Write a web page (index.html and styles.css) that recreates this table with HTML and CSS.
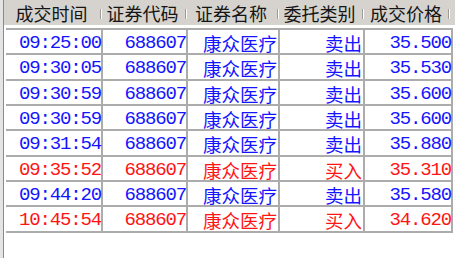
FILE: index.html
```html
<!DOCTYPE html>
<html lang="zh">
<head>
<meta charset="utf-8">
<link rel="stylesheet" href="styles.css">
</head>
<body>
<div class="frame">
  <div class="head">
    <div class="hc">成交时间</div>
    <div class="hc">证券代码</div>
    <div class="hc">证券名称</div>
    <div class="hc">委托类别</div>
    <div class="hc">成交价格</div>
  </div>
  <div class="grid">
    <div class="row sell"><span class="c num">09:25:00</span><span class="c num">688607</span><span class="c cjk">康众医疗</span><span class="c cjk">卖出</span><span class="c num">35.500</span></div>
    <div class="row sell"><span class="c num">09:30:05</span><span class="c num">688607</span><span class="c cjk">康众医疗</span><span class="c cjk">卖出</span><span class="c num">35.530</span></div>
    <div class="row sell"><span class="c num">09:30:59</span><span class="c num">688607</span><span class="c cjk">康众医疗</span><span class="c cjk">卖出</span><span class="c num">35.600</span></div>
    <div class="row sell"><span class="c num">09:30:59</span><span class="c num">688607</span><span class="c cjk">康众医疗</span><span class="c cjk">卖出</span><span class="c num">35.600</span></div>
    <div class="row sell"><span class="c num">09:31:54</span><span class="c num">688607</span><span class="c cjk">康众医疗</span><span class="c cjk">卖出</span><span class="c num">35.880</span></div>
    <div class="row buy"><span class="c num">09:35:52</span><span class="c num">688607</span><span class="c cjk">康众医疗</span><span class="c cjk">买入</span><span class="c num">35.310</span></div>
    <div class="row sell"><span class="c num">09:44:20</span><span class="c num">688607</span><span class="c cjk">康众医疗</span><span class="c cjk">卖出</span><span class="c num">35.580</span></div>
    <div class="row buy"><span class="c num">10:45:54</span><span class="c num">688607</span><span class="c cjk">康众医疗</span><span class="c cjk">买入</span><span class="c num">34.620</span></div>
  </div>
</div>
</body>
</html>
```
FILE: styles.css
```css
html, body {
  margin: 0;
  padding: 0;
}
body {
  width: 455px;
  height: 258px;
  overflow: hidden;
  background: #e4e4e4;
}
.frame {
  margin-left: 3px;
  border-left: 1px solid #8a8a8a;
  height: 258px;
  box-sizing: border-box;
  background: #ffffff;
}
.head {
  height: 28px;
  box-sizing: border-box;
  border-bottom: 3px solid #ffffff;
  background: #d6d3ce;
  display: grid;
  grid-template-columns: 97px 85px 92px 85px 88px;
  padding-left: 2px;
}
.hc {
  position: relative;
  display: flex;
  align-items: center;
  justify-content: center;
  padding-right: 6px;
  font: 18px "Noto Sans CJK SC", sans-serif;
  color: #151515;
  line-height: 1;
}
.hc::after {
  content: "";
  position: absolute;
  right: 2px;
  top: 9px;
  height: 10px;
  width: 1px;
  background: #9c9c9c;
  box-shadow: 1px 0 0 #ffffff;
}
.hc:last-child::after {
  right: 4px;
}
.grid {
  margin-left: 2px;
  width: 447px;
  border-top: 2px solid #acacac;
}
.row {
  display: grid;
  grid-template-columns: 97px 85px 92px 85px 88px;
  height: 25.333px;
  box-sizing: border-box;
  border-bottom: 2px solid #acacac;
  background: #ffffff;
}
.c {
  border-right: 2px solid #acacac;
  display: flex;
  align-items: center;
  justify-content: flex-end;
  padding-right: 1px;
  line-height: 1;
  white-space: nowrap;
}
.num {
  font: 19px "Liberation Mono", "DejaVu Sans Mono", monospace;
  letter-spacing: -1.15px;
  padding-right: 0;
}
.cjk {
  font: 18.5px "Noto Sans CJK SC", sans-serif;
}
.sell { color: #1414ff; }
.buy { color: #ff1414; }
```
